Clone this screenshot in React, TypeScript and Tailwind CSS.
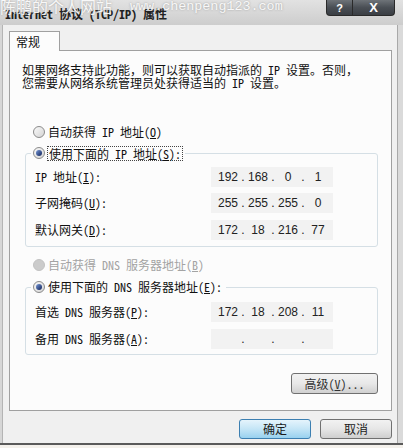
import React, { Fragment } from "react";

function Radio({ checked, disabled }: { checked?: boolean; disabled?: boolean }) {
  if (disabled) {
    return <span className="inline-block w-[12px] h-[12px] rounded-full bg-[#cbcbcb] border border-[#c2c2c2] shrink-0" />;
  }
  return (
    <span className="inline-flex w-[12px] h-[12px] rounded-full border border-[#8b8b8b] bg-linear-to-br from-[#fafafa] to-[#d4d4d4] items-center justify-center shrink-0">
      {checked && <span className="w-[6px] h-[6px] rounded-full bg-linear-to-br from-[#7a9ad8] to-[#13235a]" />}
    </span>
  );
}

function IpField({ parts }: { parts: string[] }) {
  return (
    <div className="w-[122px] h-[20px] bg-[#f2f2f2] flex items-center pl-[3px] font-[family-name:'Liberation_Sans',sans-serif] text-[12px] text-[#222]">
      {parts.map((p, i) => (
        <Fragment key={i}>
          <span className="w-[28px] flex justify-center">{p}</span>
          {i < 3 && <span className="w-[2px] flex justify-center">.</span>}
        </Fragment>
      ))}
    </div>
  );
}

function Row({ label, parts }: { label: React.ReactNode; parts: string[] }) {
  return (
    <div className="flex items-center h-[20px] pl-[9px]">
      <span className="w-[176px] whitespace-pre">{label}</span>
      <IpField parts={parts} />
    </div>
  );
}

function VistaButton({ children, primary, w }: { children: React.ReactNode; primary?: boolean; w: string }) {
  return (
    <div
      className={
        "h-[20px] rounded-[3px] border flex items-center justify-center relative overflow-hidden " +
        w +
        (primary
          ? " border-[#3c7fb1] bg-linear-to-b from-[#e5f4fc] via-[#c4e5f6] to-[#98d1ef]"
          : " border-[#707070] bg-linear-to-b from-[#f2f2f2] via-[#e6e6e6] to-[#cfcfcf]")
      }
    >
      <span className="relative text-[#1a1a1a]">{children}</span>
    </div>
  );
}

export default function App() {
  const cjk = "font-[family-name:'Noto_Sans_Mono_CJK_SC','Noto_Sans_CJK_SC',monospace]";
  return (
    <div className={"w-[403px] h-[448px] bg-[#f4f1ec] overflow-hidden text-[12px] leading-[16px] text-[#111] " + cjk}>
      {/* Title bar */}
      <div className="relative h-[25px] flex items-start bg-linear-to-b from-[#e2e2e2] to-[#cdcdcd]">
        <div className="pl-[5px] pt-[7px] font-bold text-[12px] leading-[14px] text-[#222] whitespace-pre">
          Internet 协议 (TCP/IP) 属性
        </div>
        <div className="ml-auto mr-[8px] flex h-[16px]">
          <div className="w-[27px] h-[16px] rounded-bl-[4px] border border-t-0 border-[#2a2a2a] bg-linear-to-b from-[#6e7378] via-[#4a4f55] to-[#3a3e44] flex items-center justify-center text-white font-bold text-[11px] font-[family-name:'Liberation_Sans',sans-serif]">
            ?
          </div>
          <div className="w-[42px] h-[16px] rounded-br-[4px] border border-t-0 border-l-0 border-[#2a2a2a] bg-linear-to-b from-[#6e7378] via-[#4a4f55] to-[#3a3e44] flex items-center justify-center text-white font-bold text-[13px] font-[family-name:'Liberation_Sans',sans-serif]">
            X
          </div>
        </div>
        {/* watermark overlay */}
        <div className="absolute left-0 top-[-2px] flex items-start whitespace-pre pointer-events-none">
          <span className="text-[16px] leading-[17px] text-white/90 [text-shadow:0_0_2px_rgba(120,120,120,0.7)]">陈鹏的个人网站</span>
          <span className="ml-[18px] mt-[2px] text-[13.4px] leading-[14px] text-white/90 font-[family-name:'Liberation_Mono',monospace] [text-shadow:0_0_2px_rgba(120,120,120,0.7)]">
            www.chenpeng123.com
          </span>
        </div>
      </div>

      {/* Body */}
      <div className="flex h-[418px]">
        <div className="w-[3px] bg-[#d6d6d6] border-r border-[#b4b4b4]" />
        <div className="flex-1 bg-[#f0f0f0] pl-[6px] pt-[6px]">
          {/* Tab */}
          <div className="relative z-10 w-[51px] h-[20px] -mb-px border border-b-0 border-[#a0a0a0] bg-[#fcfcfc] pl-[6px] pt-[2px] leading-[16px]">
            常规
          </div>
          {/* Panel */}
          <div className="w-[383px] h-[361px] border border-[#a0a0a0] bg-[#fcfcfc] flex flex-col">
            <div className="pl-[12px] pt-[12px] leading-[13px]">
              <div className="whitespace-pre">如果网络支持此功能，则可以获取自动指派的 IP 设置。否则，</div>
              <div className="whitespace-pre">您需要从网络系统管理员处获得适当的 IP 设置。</div>
            </div>

            <div className="mt-[35px] pl-[23px] h-[16px] flex items-center">
              <Radio />
              <span className="ml-[3px] whitespace-pre">
                自动获得 IP 地址(<u>O</u>)
              </span>
            </div>

            <fieldset className="mt-[5px] ml-[15px] mr-[13px] border border-[#d5dfe5] rounded-[3px] pt-[6px] pb-[6px] flex flex-col gap-[6px]">
              <legend className="ml-[5px] px-[2px] h-[16px] flex items-center">
                <Radio checked />
                <span className="ml-[2px] px-[1px] border border-dotted border-[#444] leading-[13px] whitespace-pre">
                  使用下面的 IP 地址(<u>S</u>):
                </span>
              </legend>
              <Row label={<>IP 地址(<u>I</u>):</>} parts={["192", "168", "0", "1"]} />
              <Row label={<>子网掩码(<u>U</u>):</>} parts={["255", "255", "255", "0"]} />
              <div className="mt-[1px]">
                <Row label={<>默认网关(<u>D</u>):</>} parts={["172", "18", "216", "77"]} />
              </div>
            </fieldset>

            <div className="mt-[10px] pl-[23px] h-[16px] flex items-center text-[#a3a3a3]">
              <Radio disabled />
              <span className="ml-[3px] whitespace-pre">
                自动获得 DNS 服务器地址(<u>B</u>)
              </span>
            </div>

            <fieldset className="mt-[6px] ml-[15px] mr-[13px] border border-[#d5dfe5] rounded-[3px] pt-[7px] pb-[5px] flex flex-col gap-[7px]">
              <legend className="ml-[5px] px-[2px] h-[16px] flex items-center">
                <Radio checked />
                <span className="ml-[3px] pr-[2px] whitespace-pre">
                  使用下面的 DNS 服务器地址(<u>E</u>):
                </span>
              </legend>
              <Row label={<>首选 DNS 服务器(<u>P</u>):</>} parts={["172", "18", "208", "11"]} />
              <Row label={<>备用 DNS 服务器(<u>A</u>):</>} parts={["", "", "", ""]} />
            </fieldset>

            <div className="mt-[18px] mr-[13px] flex justify-end">
              <div className="h-[21px] w-[87px] rounded-[3px] border border-[#707070] bg-linear-to-b from-[#f2f2f2] via-[#e8e8e8] to-[#d0d0d0] flex items-center justify-center text-[#333] whitespace-pre">
                高级(<u>V</u>)...
              </div>
            </div>
          </div>

          {/* Bottom buttons */}
          <div className="w-[383px] mt-[8px] flex justify-end gap-[9px]">
            <VistaButton primary w="w-[72px]">确定</VistaButton>
            <VistaButton w="w-[72px]">取消</VistaButton>
          </div>
        </div>
        <div className="w-[6px] bg-[#dadada] border-l border-[#a9a9a9]" />
      </div>
      <div className="h-[2px] bg-[#5a5a5a]" />
    </div>
  );
}
